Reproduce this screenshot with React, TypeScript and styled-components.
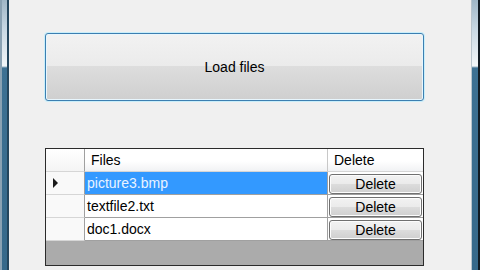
import React, { FC } from 'react';
import styled, { createGlobalStyle } from 'styled-components';

const GlobalStyle = createGlobalStyle`
    html, body {
        margin: 0;
        padding: 0;
        width: 480px;
        height: 270px;
        overflow: hidden;
        background: #f0f0f0;
    }
    body {
        font-family: 'Liberation Sans', Arial, sans-serif;
        font-size: 14px;
        color: #000;
    }
`;

const Window = styled.div`
    display: flex;
    width: 480px;
    height: 270px;
`;

const Frame = styled.div<{ side: 'left' | 'right' }>`
    width: 9px;
    flex-shrink: 0;
    box-sizing: border-box;
    background:
        linear-gradient(to bottom, #9fb6c6 0px, #c9d9e4 30px, #f2f6f8 66px, #3d7193 68px, #36698a 270px);
    ${(p) =>
        p.side === 'left'
            ? `border-left: 2px solid #8aa2b3; border-right: 2px solid #23455c;`
            : `border-left: 1px solid #b9c5cd; border-right: 2px solid #101a22;`}
`;

const Client = styled.div`
    flex: 1;
    display: flex;
    flex-direction: column;
    padding: 33px 47px 0 36px;
    background: #f0f0f0;
`;

const LoadButton = styled.button`
    height: 68px;
    width: 379px;
    box-sizing: border-box;
    border: 1px solid #3c7fb1;
    border-radius: 3px;
    box-shadow: 0 0 0 1px #c9eefa, inset 0 0 0 1px #e8f6fd;
    background: linear-gradient(to bottom, #f2f2f2 0%, #ebebeb 48%, #dddddd 49%, #cfcfcf 100%);
    font-family: 'Liberation Sans', Arial, sans-serif;
    font-size: 14px;
    color: #000;
    padding: 0;
`;

const Grid = styled.div`
    margin-top: 47px;
    width: 379px;
    height: 118px;
    box-sizing: border-box;
    border: 1px solid #2b2b2b;
    background: #ababab;
    display: flex;
    flex-direction: column;
`;

const Row = styled.div`
    display: grid;
    grid-template-columns: 39px 243px 95px;
    height: 23px;
`;

const RowHead = styled.div<{ header?: boolean }>`
    box-sizing: border-box;
    border-right: 1px solid #a0a0a0;
    border-bottom: 1px solid #d6d6d6;
    background: ${(p) => (p.header ? 'linear-gradient(to bottom, #ffffff, #f4f4f4)' : '#f9f9f9')};
    display: flex;
    align-items: center;
    padding-left: 6px;
`;

const HeadCell = styled.div<{ last?: boolean }>`
    box-sizing: border-box;
    background: linear-gradient(to bottom, #ffffff 0%, #ffffff 55%, #f1f2f4 100%);
    border-right: ${(p) => (p.last ? 'none' : '1px solid #c8c8c8')};
    border-bottom: 1px solid #d5d5d5;
    display: flex;
    align-items: center;
    padding-left: 6px;
`;

const FileCell = styled.div<{ selected?: boolean }>`
    box-sizing: border-box;
    background: ${(p) => (p.selected ? '#3399ff' : '#ffffff')};
    color: ${(p) => (p.selected ? '#e9f3ff' : '#000')};
    border-right: 1px solid #a0a0a0;
    border-bottom: 1px solid #a0a0a0;
    display: flex;
    align-items: center;
    padding-left: 2px;
`;

const ButtonCell = styled.div`
    box-sizing: border-box;
    background: #ffffff;
    border-bottom: 1px solid #a0a0a0;
    display: flex;
    align-items: center;
    padding: 1px 1px 0 1px;
`;

const DeleteButton = styled.button`
    width: 93px;
    height: 20px;
    box-sizing: border-box;
    border: 1px solid #707070;
    border-radius: 3px;
    box-shadow: inset 0 0 0 1px #fcfcfc;
    background: linear-gradient(to bottom, #f2f2f2 0%, #ebebeb 48%, #dddddd 49%, #cfcfcf 100%);
    font-family: 'Liberation Sans', Arial, sans-serif;
    font-size: 14px;
    color: #000;
    padding: 0;
    line-height: 18px;
`;

const Arrow = styled.span`
    width: 0;
    height: 0;
    border-top: 5px solid transparent;
    border-bottom: 5px solid transparent;
    border-left: 5px solid #1a1a1a;
    margin-left: 1px;
`;

const files = ['picture3.bmp', 'textfile2.txt', 'doc1.docx'];

const App: FC = () => {
    return (
        <>
            <GlobalStyle />
            <Window>
                <Frame side='left' />
                <Client>
                    <LoadButton>Load files</LoadButton>
                    <Grid>
                        <Row>
                            <RowHead header />
                            <HeadCell>Files</HeadCell>
                            <HeadCell last>Delete</HeadCell>
                        </Row>
                        {files.map((name, i) => (
                            <Row key={name}>
                                <RowHead>{i === 0 && <Arrow />}</RowHead>
                                <FileCell selected={i === 0}>{name}</FileCell>
                                <ButtonCell>
                                    <DeleteButton>Delete</DeleteButton>
                                </ButtonCell>
                            </Row>
                        ))}
                    </Grid>
                </Client>
                <Frame side='right' />
            </Window>
        </>
    );
};

export default App;
